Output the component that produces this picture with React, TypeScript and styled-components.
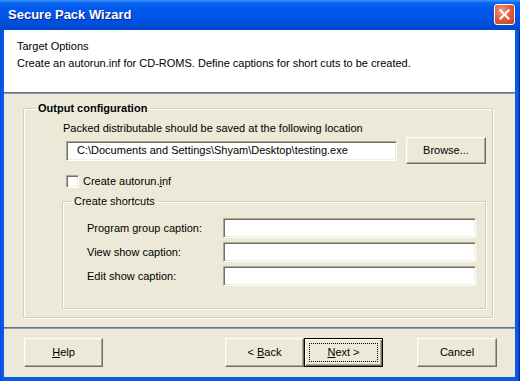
import React from "react";
import styled, { createGlobalStyle, css } from "styled-components";

const GlobalStyle = createGlobalStyle`
  html, body { margin: 0; padding: 0; }
  body {
    width: 520px;
    height: 381px;
    overflow: hidden;
    font-family: "Liberation Sans", Arial, sans-serif;
    font-size: 11px;
    color: #000;
  }
  * { box-sizing: border-box; }
`;

const Window = styled.div`
  width: 520px;
  height: 381px;
  display: flex;
  flex-direction: column;
  background: linear-gradient(90deg, #0831d9 0px, #0a5ae8 1px, #0a5ae8 calc(100% - 2px), #0019a5 100%);
`;

const TitleBar = styled.div`
  height: 30px;
  flex: none;
  display: flex;
  align-items: center;
  justify-content: space-between;
  padding: 0 5px 1px 8px;
  background: linear-gradient(
    180deg,
    #3d95ff 0px,
    #0a66f0 3px,
    #0058ee 8px,
    #0055e8 16px,
    #004ed9 24px,
    #0045c9 30px
  );
`;

const Title = styled.span`
  font-family: "Liberation Sans", Arial, sans-serif;
  font-weight: bold;
  font-size: 13px;
  color: #fff;
  text-shadow: 1px 1px 0 #0a1e8c;
`;

const CloseButton = styled.div`
  width: 21px;
  height: 21px;
  border: 1px solid #fff;
  border-radius: 3px;
  background: radial-gradient(circle at 35% 30%, #f39a7e 0%, #e2603e 45%, #c83c1c 100%);
  display: flex;
  align-items: center;
  justify-content: center;
`;

const Client = styled.div`
  flex: 1;
  margin: 0 5px 4px 4px;
  display: flex;
  flex-direction: column;
  background: #ece9d8;
`;

const Header = styled.div`
  height: 62px;
  flex: none;
  background: #fff;
  padding: 10px 0 0 13px;
  display: flex;
  flex-direction: column;
  gap: 4px;
  line-height: 13px;
`;

const HeaderTitle = styled.div`
  font-size: 11px;
`;

const HeaderSub = styled.div`
  font-size: 11px;
`;

const Separator = styled.div`
  height: 2px;
  flex: none;
  border-top: 1px solid #5f7489;
  border-bottom: 1px solid #8d9cab;
`;

const Body = styled.div`
  flex: 1;
  display: flex;
  flex-direction: column;
  padding: 8px 22px 9px 19px;
`;

const Group = styled.fieldset<{ $grow?: boolean }>`
  margin: 0;
  padding: 0;
  border: 1px solid #d0d0bf;
  box-shadow: inset 1px 1px 0 #fff, 1px 1px 0 #fff;
  min-width: 0;
  ${(p) =>
    p.$grow &&
    css`
      flex: 1;
    `}
`;

const Legend = styled.legend<{ $bold?: boolean; $offset: number }>`
  padding: 0 3px 0 2px;
  margin-left: ${(p) => p.$offset}px;
  line-height: 13px;
  font-size: 11px;
  font-weight: ${(p) => (p.$bold ? "bold" : "normal")};
`;

const OuterContent = styled.div`
  display: flex;
  flex-direction: column;
  padding: 7px 6px 7px 38px;
`;

const Caption = styled.div`
  line-height: 13px;
  margin-left: 1px;
`;

const PathRow = styled.div`
  display: flex;
  align-items: center;
  gap: 9px;
  margin: 2px 0 0 4px;
`;

const sunken = css`
  background: #fff;
  border-style: solid;
  border-width: 1px;
  border-color: #aca899 #fff #fff #aca899;
  box-shadow: inset 1px 1px 0 #716f64, inset -1px -1px 0 #f1efe2;
`;

const TextBox = styled.div<{ $w: number }>`
  ${sunken};
  width: ${(p) => p.$w}px;
  height: 20px;
  padding: 0 0 0 10px;
  display: flex;
  align-items: center;
  line-height: 13px;
  white-space: nowrap;
  overflow: hidden;
`;

const Button = styled.div<{ $w: number; $h: number; $default?: boolean }>`
  width: ${(p) => p.$w}px;
  height: ${(p) => p.$h}px;
  flex: none;
  position: relative;
  display: flex;
  align-items: center;
  justify-content: center;
  background: #ece9d8;
  border-style: solid;
  border-width: 1px;
  border-color: #fff #716f64 #716f64 #fff;
  box-shadow: inset -1px -1px 0 #aca899, inset 1px 1px 0 #f1efe2;
  line-height: 13px;
  ${(p) =>
    p.$default &&
    css`
      border: 1px solid #000;
      box-shadow: inset 1px 1px 0 #fff, inset -1px -1px 0 #716f64, inset -2px -2px 0 #aca899;
    `}
`;

const FocusRing = styled.span`
  position: absolute;
  inset: 4px;
  border: 1px dotted #000;
  pointer-events: none;
`;

const Mn = styled.span`
  text-decoration: underline;
  text-underline-offset: 1px;
`;

const CheckRow = styled.div`
  display: flex;
  align-items: center;
  gap: 4px;
  margin: 11px 0 0 4px;
  line-height: 13px;
`;

const CheckBox = styled.span`
  ${sunken};
  width: 13px;
  height: 13px;
  flex: none;
`;

const InnerWrap = styled.div`
  margin-top: 7px;
  display: flex;
  flex-direction: column;
`;

const ShortcutGrid = styled.div`
  display: grid;
  grid-template-columns: 136px 253px;
  row-gap: 4px;
  align-items: center;
  padding: 10px 0 22px 24px;
  line-height: 13px;
`;

const Footer = styled.div`
  height: 48px;
  flex: none;
  display: flex;
  align-items: flex-start;
  padding: 9px 18px 0 20px;
`;

const NavGroup = styled.div`
  margin-left: auto;
  display: flex;
`;

const CancelWrap = styled.div`
  margin-left: 34px;
`;

export default function App() {
  return (
    <>
      <GlobalStyle />
      <Window>
        <TitleBar>
          <Title>Secure Pack Wizard</Title>
          <CloseButton>
            <svg width="13" height="13" viewBox="0 0 13 13">
              <path d="M2.5 2.5 L10.5 10.5 M10.5 2.5 L2.5 10.5" stroke="#fff" strokeWidth="2.2" strokeLinecap="square" />
            </svg>
          </CloseButton>
        </TitleBar>
        <Client>
          <Header>
            <HeaderTitle>Target Options</HeaderTitle>
            <HeaderSub>Create an autorun.inf for CD-ROMS. Define captions for short cuts to be created.</HeaderSub>
          </Header>
          <Separator />
          <Body>
            <Group $grow>
              <Legend $bold $offset={12}>Output configuration</Legend>
              <OuterContent>
                <Caption>Packed distributable should be saved at the following location</Caption>
                <PathRow>
                  <TextBox $w={334}>C:\Documents and Settings\Shyam\Desktop\testing.exe</TextBox>
                  <Button $w={80} $h={27}>Browse...</Button>
                </PathRow>
                <CheckRow>
                  <CheckBox />
                  <span>Create autorun.<Mn>i</Mn>nf</span>
                </CheckRow>
                <InnerWrap>
                  <Group>
                    <Legend $offset={9}>Create shortcuts</Legend>
                    <ShortcutGrid>
                      <span>Program group caption:</span>
                      <TextBox $w={253} />
                      <span>View show caption:</span>
                      <TextBox $w={253} />
                      <span>Edit show caption:</span>
                      <TextBox $w={253} />
                    </ShortcutGrid>
                  </Group>
                </InnerWrap>
              </OuterContent>
            </Group>
          </Body>
          <Separator />
          <Footer>
            <Button $w={79} $h={29}>
              <span><Mn>H</Mn>elp</span>
            </Button>
            <NavGroup>
              <Button $w={79} $h={29}>
                <span>&lt; <Mn>B</Mn>ack</span>
              </Button>
              <Button $w={79} $h={29} $default>
                <FocusRing />
                <span><Mn>N</Mn>ext &gt;</span>
              </Button>
              <CancelWrap>
                <Button $w={80} $h={29}>Cancel</Button>
              </CancelWrap>
            </NavGroup>
          </Footer>
        </Client>
      </Window>
    </>
  );
}
